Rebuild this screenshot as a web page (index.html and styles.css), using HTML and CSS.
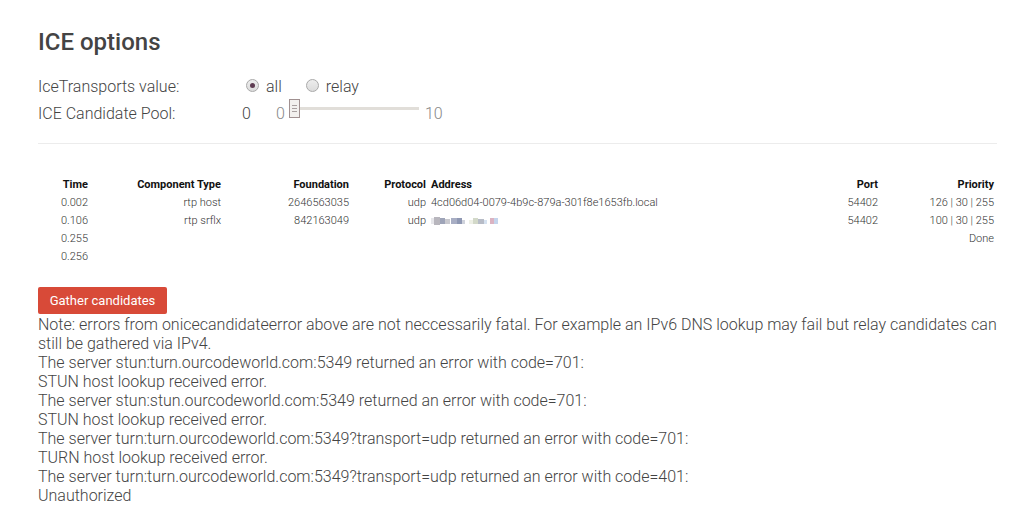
FILE: index.html
```html
<!DOCTYPE html>
<html>
<head>
<meta charset="utf-8">
<link rel="stylesheet" href="styles.css">
</head>
<body>
<div class="container">
  <h2 class="title">ICE options</h2>
  <div class="options">
    <div class="opt-row">
      <span class="opt-label">IceTransports value:</span>
      <span class="radio checked"></span><span class="radio-text first">all</span>
      <span class="radio"></span><span class="radio-text">relay</span>
    </div>
    <div class="opt-row">
      <span class="opt-label">ICE Candidate Pool:</span>
      <span class="pool-val">0</span>
      <span class="range-min">0</span>
      <span class="slider"><span class="thumb"><i></i><i></i><i></i></span><span class="track"></span></span>
      <span class="range-max">10</span>
    </div>
  </div>
  <div class="divider"></div>
  <table class="cands">
    <colgroup>
      <col class="c-time"><col class="c-comp"><col class="c-found"><col class="c-proto"><col class="c-addr"><col class="c-port"><col class="c-prio">
    </colgroup>
    <thead>
      <tr><th>Time</th><th>Component Type</th><th>Foundation</th><th>Protocol</th><th class="left">Address</th><th>Port</th><th>Priority</th></tr>
    </thead>
    <tbody>
      <tr><td>0.002</td><td>rtp host</td><td>2646563035</td><td>udp</td><td class="left">4cd06d04-0079-4b9c-879a-301f8e1653fb.local</td><td>54402</td><td>126 | 30 | 255</td></tr>
      <tr><td>0.106</td><td>rtp srflx</td><td>842163049</td><td>udp</td><td class="left"><svg class="blur" width="70" height="8" viewBox="0 0 70 8">
        <rect x="0" y="1" width="3" height="6" fill="#e6e6ea"/><rect x="3" y="0" width="6" height="8" fill="#b8b6bd"/><rect x="9" y="1" width="5" height="6" fill="#9ea4b8"/><rect x="14" y="2" width="5" height="5" fill="#c9c9cf"/>
        <rect x="20" y="1" width="6" height="6" fill="#a8aec4"/><rect x="26" y="1" width="5" height="6" fill="#8f98b3"/><rect x="31" y="3" width="3" height="4" fill="#d0d3dc"/>
        <rect x="38" y="3" width="4" height="4" fill="#eef0e6"/><rect x="42" y="1" width="5" height="6" fill="#d3d9c9"/><rect x="47" y="2" width="6" height="5" fill="#b7bcc7"/><rect x="53" y="3" width="3" height="4" fill="#d6e2f0"/>
        <rect x="59" y="1" width="4" height="6" fill="#dbb3c2"/><rect x="63" y="1" width="4" height="6" fill="#c4d4ec"/>
      </svg></td><td>54402</td><td>100 | 30 | 255</td></tr>
      <tr><td>0.255</td><td></td><td></td><td></td><td class="left"></td><td></td><td>Done</td></tr>
      <tr><td>0.256</td><td></td><td></td><td></td><td class="left"></td><td></td><td></td></tr>
    </tbody>
  </table>
  <button class="gather">Gather candidates</button>
  <div class="errors">Note: errors from onicecandidateerror above are not neccessarily fatal. For example an IPv6 DNS lookup may fail but relay candidates can still be gathered via IPv4.<br>The server stun:turn.ourcodeworld.com:5349 returned an error with code=701:<br>STUN host lookup received error.<br>The server stun:stun.ourcodeworld.com:5349 returned an error with code=701:<br>STUN host lookup received error.<br>The server turn:turn.ourcodeworld.com:5349?transport=udp returned an error with code=701:<br>TURN host lookup received error.<br>The server turn:turn.ourcodeworld.com:5349?transport=udp returned an error with code=401:<br>Unauthorized</div>
</div>
</body>
</html>
```

FILE: styles.css
```css
html, body {
  margin: 0;
  padding: 0;
  background: #fff;
}
body {
  font-family: Roboto, "Liberation Sans", sans-serif;
  font-weight: 300;
  color: #444;
}
.container {
  width: 960px;
  padding: 28px 0 0 38px;
}
.title {
  margin: 0;
  font-size: 24px;
  line-height: 28px;
  font-weight: 500;
  color: #444;
}
.options {
  margin-top: 17px;
}
.opt-row {
  display: flex;
  align-items: center;
  height: 27px;
  font-size: 16px;
}
.opt-label {
  width: 208px;
}
.radio {
  width: 11px;
  height: 11px;
  border: 1px solid #a9a9a9;
  border-radius: 50%;
  background: linear-gradient(#ededed, #dcdcdc);
  display: flex;
  align-items: center;
  justify-content: center;
  margin-top: -3px;
}
.radio.checked::after {
  content: "";
  width: 5px;
  height: 5px;
  border-radius: 50%;
  background: #5e3c52;
}
.radio-text {
  margin-left: 7px;
}
.radio-text.first {
  margin-right: 24px;
}
.pool-val {
  width: 34px;
  color: #444;
  margin-left: -4px;
}
.range-min {
  color: #888;
}
.slider {
  display: flex;
  align-items: center;
  margin-left: 4px;
  margin-top: -11px;
}
.thumb {
  width: 9px;
  height: 17px;
  border: 1px solid #a09090;
  background: #f2f0ee;
  display: flex;
  flex-direction: column;
  justify-content: center;
  align-items: center;
  gap: 2px;
}
.thumb i {
  display: block;
  width: 5px;
  height: 1px;
  background: #a8a0a0;
}
.track {
  width: 119px;
  height: 3px;
  background: #e1ded9;
}
.range-max {
  color: #888;
  margin-left: 6px;
}
.divider {
  margin-top: 16px;
  height: 1px;
  width: 959px;
  background: #ececec;
}
.cands {
  margin-top: 32px;
  border-collapse: collapse;
  table-layout: fixed;
  width: 956px;
  font-size: 11px;
  color: #333;
}
.cands th, .cands td {
  padding: 0;
  height: 18px;
  line-height: 18px;
  text-align: right;
  white-space: nowrap;
}
.cands th {
  font-weight: 700;
  color: #111;
}
.cands .left {
  text-align: left;
  padding-left: 5px;
}
.c-time { width: 50px; }
.c-comp { width: 133px; }
.c-found { width: 128px; }
.c-proto { width: 77px; }
.c-addr { width: 384px; }
.c-port { width: 68px; }
.c-prio { width: 116px; }
.blur {
  vertical-align: -1px;
}
.gather {
  display: block;
  margin-top: 21px;
  width: 129px;
  height: 27px;
  border: none;
  border-radius: 2px;
  background: #d84a38;
  color: #fff;
  font-family: Roboto, "Liberation Sans", sans-serif;
  font-weight: 400;
  font-size: 13px;
  padding: 0;
}
.errors {
  margin-top: 1px;
  font-size: 16px;
  line-height: 19px;
  width: 962px;
}
```
